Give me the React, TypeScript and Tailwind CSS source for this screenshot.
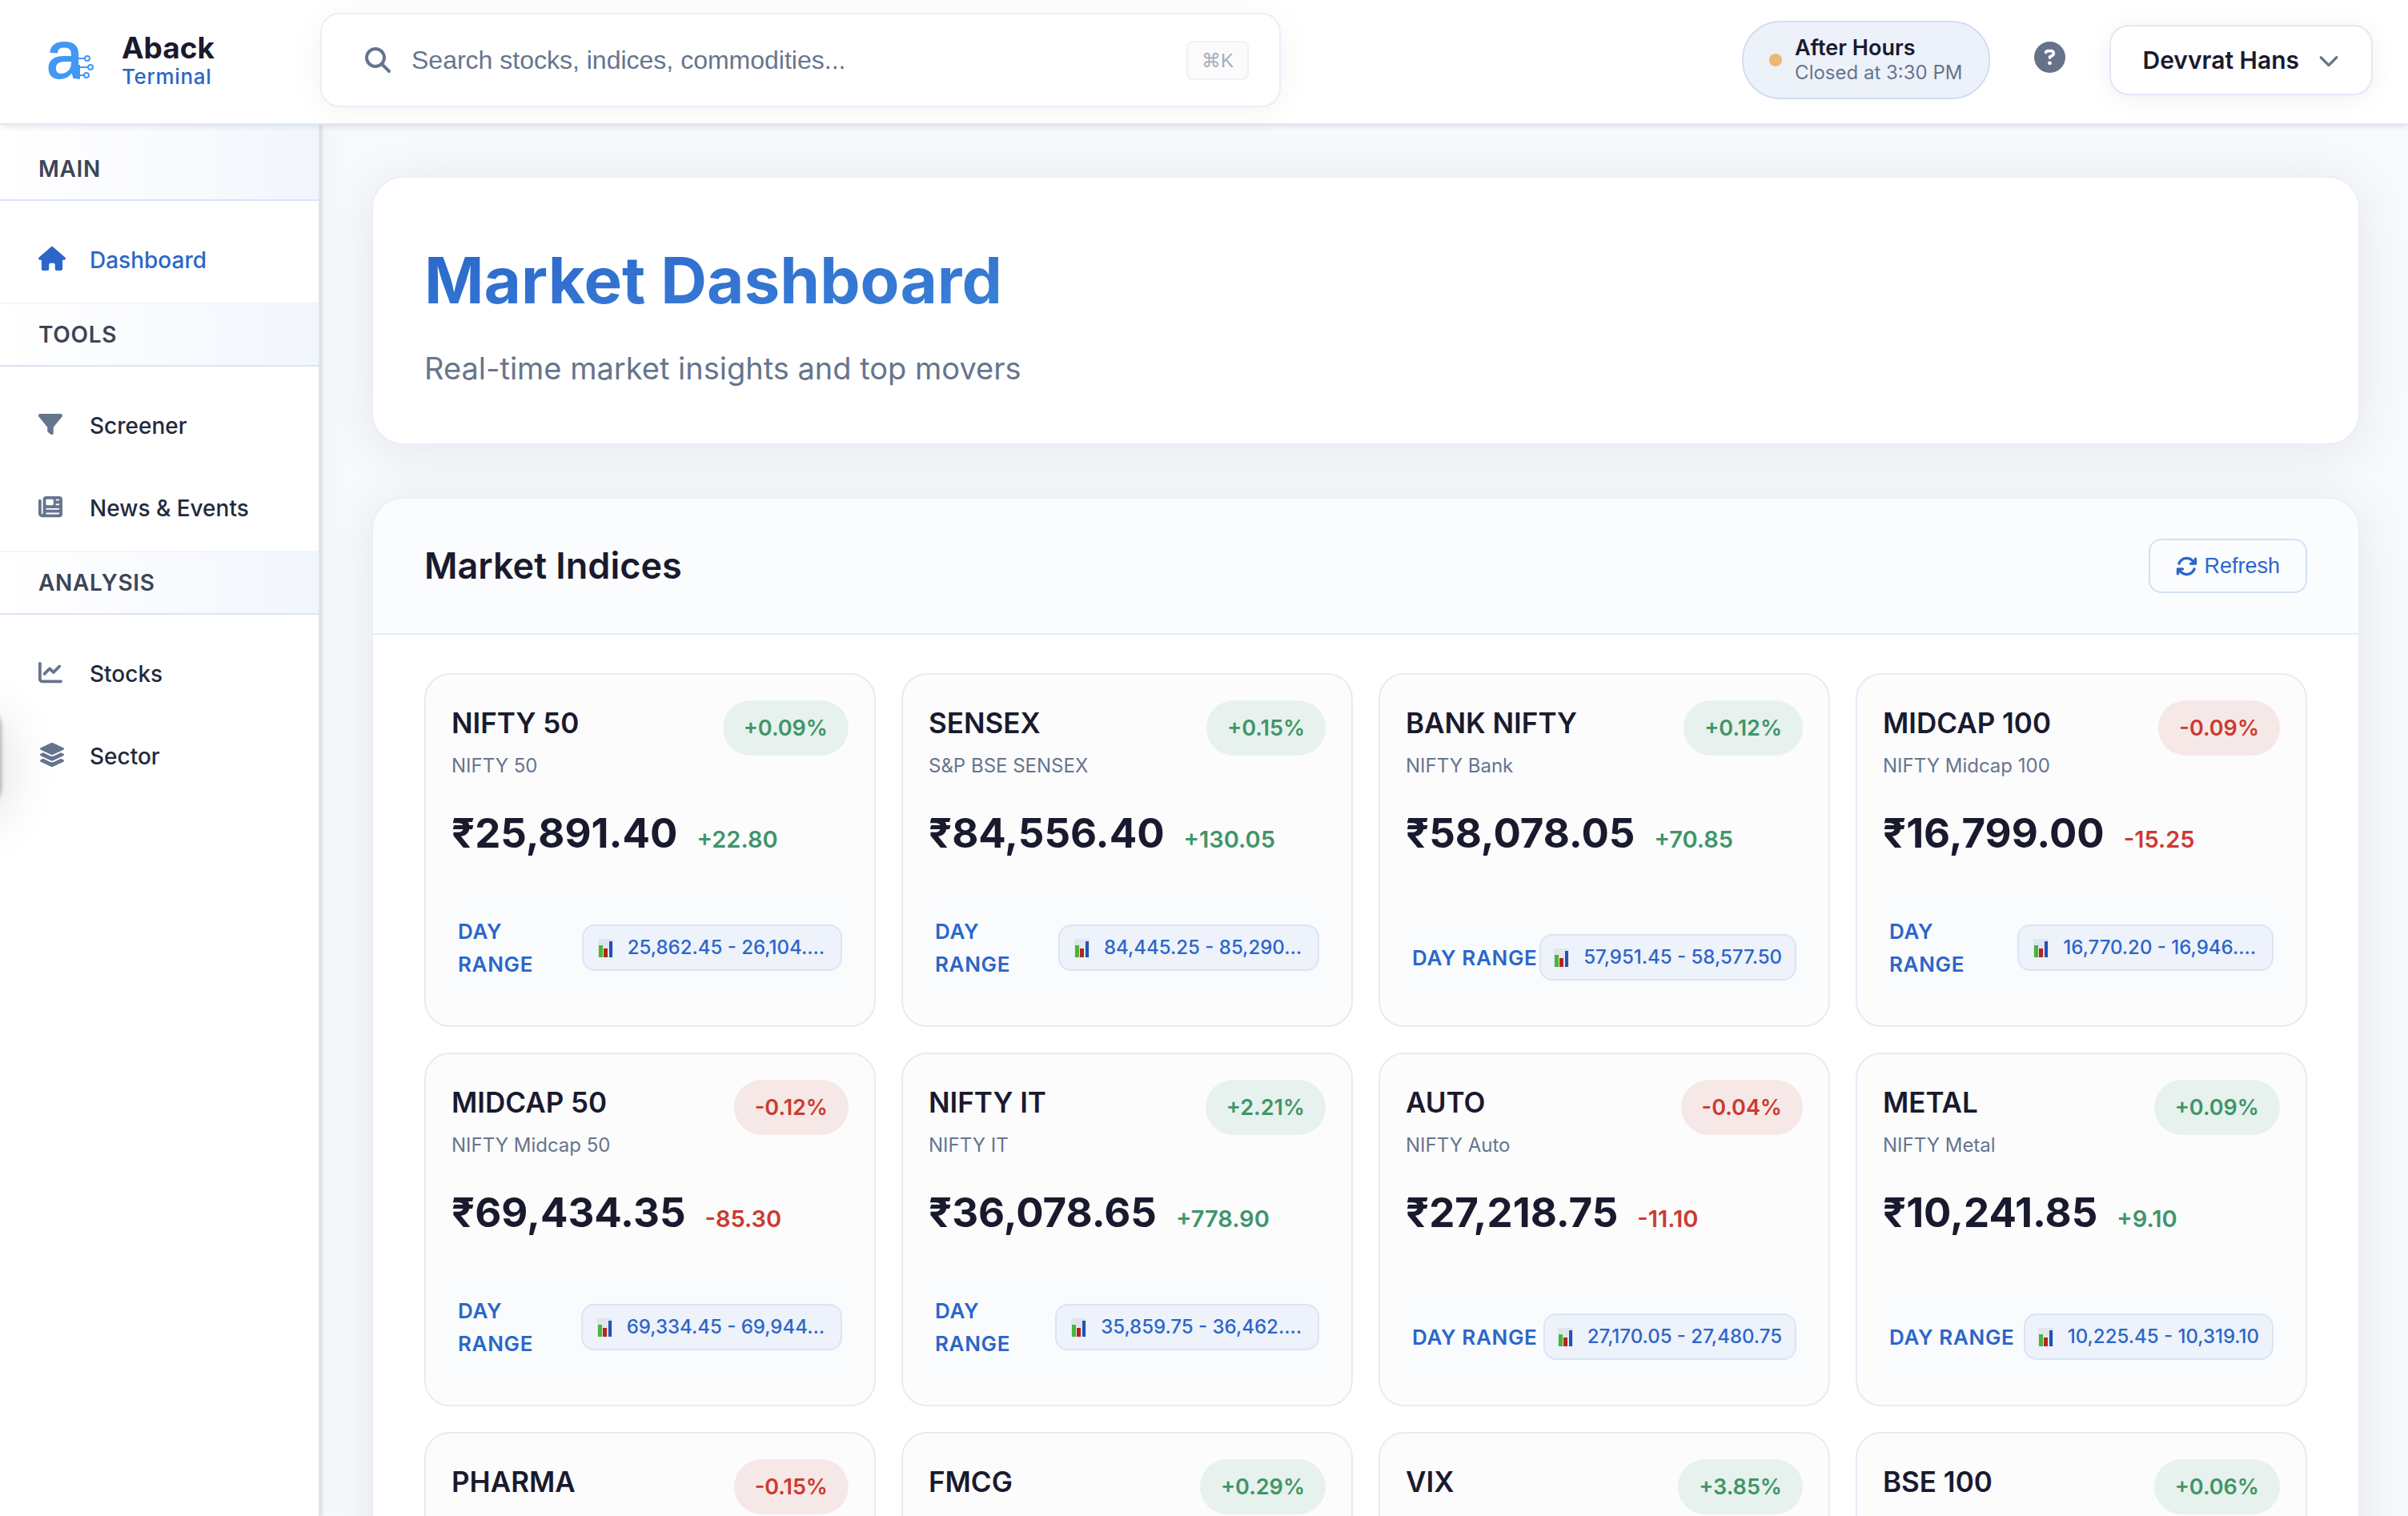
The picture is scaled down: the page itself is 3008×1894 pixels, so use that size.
import type { IconType } from "react-icons";
import {
  FaArrowsRotate,
  FaChartLine,
  FaChevronDown,
  FaCircleQuestion,
  FaFilter,
  FaHouse,
  FaLayerGroup,
  FaMagnifyingGlass,
  FaNewspaper,
} from "react-icons/fa6";

type NavItem = { label: string; icon: IconType; wide?: boolean; active?: boolean };
type NavGroup = { title: string; items: NavItem[] };

const navGroups: NavGroup[] = [
  { title: "Main", items: [{ label: "Dashboard", icon: FaHouse, wide: true, active: true }] },
  {
    title: "Tools",
    items: [
      { label: "Screener", icon: FaFilter },
      { label: "News & Events", icon: FaNewspaper },
    ],
  },
  {
    title: "Analysis",
    items: [
      { label: "Stocks", icon: FaChartLine },
      { label: "Sector", icon: FaLayerGroup, wide: true },
    ],
  },
];

type MarketIndex = {
  name: string;
  full?: string;
  pct: string;
  price?: string;
  change?: string;
  range?: string;
};

const indices: MarketIndex[] = [
  { name: "NIFTY 50", full: "NIFTY 50", pct: "+0.09%", price: "₹25,891.40", change: "+22.80", range: "25,862.45 - 26,104.…" },
  { name: "SENSEX", full: "S&P BSE SENSEX", pct: "+0.15%", price: "₹84,556.40", change: "+130.05", range: "84,445.25 - 85,290…" },
  { name: "BANK NIFTY", full: "NIFTY Bank", pct: "+0.12%", price: "₹58,078.05", change: "+70.85", range: "57,951.45 - 58,577.50" },
  { name: "MIDCAP 100", full: "NIFTY Midcap 100", pct: "-0.09%", price: "₹16,799.00", change: "-15.25", range: "16,770.20 - 16,946.…" },
  { name: "MIDCAP 50", full: "NIFTY Midcap 50", pct: "-0.12%", price: "₹69,434.35", change: "-85.30", range: "69,334.45 - 69,944…" },
  { name: "NIFTY IT", full: "NIFTY IT", pct: "+2.21%", price: "₹36,078.65", change: "+778.90", range: "35,859.75 - 36,462.…" },
  { name: "AUTO", full: "NIFTY Auto", pct: "-0.04%", price: "₹27,218.75", change: "-11.10", range: "27,170.05 - 27,480.75" },
  { name: "METAL", full: "NIFTY Metal", pct: "+0.09%", price: "₹10,241.85", change: "+9.10", range: "10,225.45 - 10,319.10" },
  { name: "PHARMA", pct: "-0.15%" },
  { name: "FMCG", pct: "+0.29%" },
  { name: "VIX", pct: "+3.85%" },
  { name: "BSE 100", pct: "+0.06%" },
];

function Logo() {
  return (
    <svg viewBox="0 0 60 56" className="h-14 w-15 shrink-0 overflow-visible" aria-hidden="true">
      <text
        x="-2"
        y="50"
        fontFamily="'Liberation Sans', sans-serif"
        fontSize="82"
        fill="#4299f5"
        stroke="#4299f5"
        strokeWidth="2"
      >
        a
      </text>
      <rect x="31" y="34" width="9" height="17" fill="#4299f5" />
      <rect x="40" y="38" width="6" height="14" fill="#ffffff" />
      <g fill="none" stroke="#4299f5" strokeWidth="2">
        <path d="M38 26h8M38 37h12M38 47h7" />
        <circle cx="49" cy="26" r="3" fill="#ffffff" />
        <circle cx="53" cy="37" r="3" fill="#ffffff" />
        <circle cx="48" cy="47" r="3" fill="#ffffff" />
      </g>
    </svg>
  );
}

function BarsIcon() {
  return (
    <svg viewBox="0 0 19 23" className="h-[23px] w-[19px] shrink-0" aria-hidden="true">
      <rect width="19" height="23" fill="#dfe6ee" />
      <rect x="1" y="8" width="5" height="15" fill="#4cb537" />
      <rect x="7" y="12" width="5" height="11" fill="#b3261c" />
      <rect x="14" y="3" width="4" height="20" fill="#2152b8" />
    </svg>
  );
}

function Header() {
  return (
    <header className="relative z-20 flex shrink-0 items-center border-b-2 border-[#dfe8f5] bg-white pt-4 pr-11 pb-5 shadow-[0_2px_8px_rgba(0,0,0,0.10)]">
      <a href="#home" className="flex w-[400px] shrink-0 items-center gap-8 pl-15">
        <Logo />
        <span className="flex flex-col">
          <span className="text-[37px] leading-[42px] font-bold text-[#1a1a2e]">Aback</span>
          <span className="text-[26px] leading-[30px] font-medium tracking-wide text-[#2b66c9]">Terminal</span>
        </span>
      </a>
      <label className="flex h-[118px] w-[1200px] items-center gap-[26px] rounded-3xl border-2 border-[#e8effb] bg-white pr-[38px] pl-[54px] shadow-[0_4px_40px_rgba(0,0,0,0.05)]">
        <FaMagnifyingGlass className="size-8 shrink-0 text-[#66758e]" />
        <input
          type="text"
          aria-label="Search"
          placeholder="Search stocks, indices, commodities..."
          className="min-w-0 flex-1 bg-transparent font-['Liberation_Sans',sans-serif] text-[32px] outline-none placeholder:text-[#66758e]"
        />
        <kbd className="rounded-lg border-2 border-[#edf2f9] bg-[#fbfbfc] px-[17px] font-['Liberation_Sans',sans-serif] text-2xl leading-[45px] text-[#a3adbc]">
          ⌘K
        </kbd>
      </label>
      <div className="ml-auto flex items-center">
        <div className="flex h-[98px] items-center gap-4 rounded-[48px] border-2 border-[#d0def2] bg-[#edf2fa] px-8">
          <span className="size-4 rounded-full bg-[#ebb974] shadow-[0_0_20px_4px_rgba(235,185,116,0.08)]" />
          <span className="flex flex-col">
            <span className="text-[27px] leading-8 font-semibold text-[#1a1a2e]">After Hours</span>
            <span className="text-2xl leading-[30px] text-[#66758e]">Closed at 3:30 PM</span>
          </span>
        </div>
        <button type="button" aria-label="Help" className="mx-[55px] pb-2">
          <FaCircleQuestion className="size-[39px] text-[#66728a]" />
        </button>
        <button
          type="button"
          className="flex h-[88px] items-center gap-6 rounded-3xl border-2 border-[#dfe8f7] bg-white px-10 shadow-[0_4px_32px_rgba(0,0,0,0.06)]"
        >
          <span className="text-[30px] font-semibold text-[#1a1a2e]">Devvrat Hans</span>
          <FaChevronDown className="size-[26px] text-[#66758e]" />
        </button>
      </div>
    </header>
  );
}

function Sidebar() {
  return (
    <nav className="z-10 flex w-[400px] shrink-0 flex-col border-r-2 border-[#dbe5f5] bg-white shadow-[2px_0_4px_rgba(0,0,0,0.12),8px_0_32px_rgba(0,0,0,0.03)]">
      {navGroups.map((group) => (
        <section key={group.title}>
          <h2 className="border-y-2 border-t-[#f0f4fa] border-b-[#d9e4f5] bg-linear-to-r from-white to-[#f2f6fd] px-12 py-4 text-[28px] leading-11 font-semibold tracking-wide text-[#3d4556] uppercase in-[section:first-child]:border-t-0 in-[section:first-child]:pt-[33px]">
            {group.title}
          </h2>
          <ul className="pt-[22px] pb-0.5">
            {group.items.map(({ label, icon: Icon, wide, active }) => (
              <li key={label}>
                <a
                  href={`#${label.toLowerCase()}`}
                  className={`flex h-[103px] items-center pl-12 text-[28px] font-medium ${active ? "text-[#2b66c9]" : "text-[#1f2a3d]"}`}
                >
                  <span className="flex w-16 shrink-0 pb-1">
                    <Icon className={`h-[30px] ${wide ? "w-[34px]" : "w-[30px]"} ${active ? "text-[#2b66c9]" : "text-[#66758e]"}`} />
                  </span>
                  {label}
                </a>
              </li>
            ))}
          </ul>
        </section>
      ))}
    </nav>
  );
}

function IndexCard({ item }: { item: MarketIndex }) {
  const up = item.pct.startsWith("+");
  const truncated = item.range?.endsWith("…");
  return (
    <article className="flex min-w-0 flex-col rounded-4xl border-2 border-[#e5ecf7] bg-[#fcfcfd] p-8">
      <div className="flex items-start justify-between">
        <div>
          <h3 className="text-[35px] leading-14 font-semibold text-[#1a1a2e]">{item.name}</h3>
          {item.full && <p className="mt-1.5 text-2xl leading-10 text-[#66758e]">{item.full}</p>}
        </div>
        <span
          className={`rounded-full px-[26px] py-3 text-[27px] leading-[45px] font-semibold ${up ? "bg-[#e7f1ed] text-[#40956a]" : "bg-[#f6e8e7] text-[#cc3a30]"}`}
        >
          {item.pct}
        </span>
      </div>
      {item.price && (
        <div className="mt-6 flex items-baseline gap-6">
          <span className="text-[51px] leading-20 font-bold text-[#1a1a2e]">{item.price}</span>
          <span className={`text-[29px] font-semibold ${up ? "text-[#40956a]" : "text-[#cc3a30]"}`}>{item.change}</span>
        </div>
      )}
      {item.range && (
        <div className="-mx-2 mt-auto pt-[38px]">
          <div className="flex items-center justify-between rounded-xl bg-[#fafbfd] px-4 py-6">
            <span
              className={`text-[26px] leading-[41px] font-semibold tracking-wide text-[#2b66c9] uppercase ${truncated ? "w-min" : "whitespace-nowrap"}`}
            >
              Day Range
            </span>
            <span
              className={`flex items-center gap-[18px] rounded-2xl border-2 border-[#dae5f5] bg-[#eef2fa] py-[7px] text-2xl leading-10 font-medium whitespace-nowrap text-[#2b66c9] ${truncated ? "pr-5 pl-[18px]" : "px-4"}`}
            >
              <BarsIcon />
              {item.range}
            </span>
          </div>
        </div>
      )}
    </article>
  );
}

export default function App() {
  return (
    <div className="relative flex h-screen flex-col overflow-hidden bg-[#f7f9fb] font-['Inter',sans-serif]">
      <Header />
      <div className="flex min-h-0 flex-1">
        <Sidebar />
        <main className="flex min-w-0 flex-1 flex-col gap-[65px] overflow-hidden pt-16 pr-15 pl-16">
          <section className="shrink-0 rounded-[40px] border-2 border-[#e8effa] bg-white px-16 pt-20 pb-16 shadow-[0_8px_64px_rgba(0,0,0,0.08)]">
            <h1 className="w-max bg-linear-to-br from-[#2b66c9] to-[#3b82d9] bg-clip-text text-[80px] leading-24 font-bold text-transparent">
              Market Dashboard
            </h1>
            <p className="mt-8 text-[38px] leading-15 text-[#66758e]">Real-time market insights and top movers</p>
          </section>
          <section className="shrink-0 overflow-hidden rounded-[40px] border-2 border-[#e8effa] bg-white shadow-[0_8px_64px_rgba(0,0,0,0.08)]">
            <div className="flex h-[170px] items-center justify-between border-b-2 border-[#e5ecf8] bg-[#fbfcfe] px-16">
              <h2 className="text-[45px] font-semibold text-[#1a1a2e]">Market Indices</h2>
              <button
                type="button"
                className="flex h-[68px] items-center gap-2 rounded-2xl border-2 border-[#d3e0f4] px-8 font-['Liberation_Sans',sans-serif] text-[27px] text-[#2b66c9]"
              >
                <FaArrowsRotate className="size-[27px]" />
                Refresh
              </button>
            </div>
            <div className="grid grid-cols-4 gap-8 px-16 py-12">
              {indices.map((item) => (
                <IndexCard key={item.name} item={item} />
              ))}
            </div>
          </section>
        </main>
      </div>
      <button
        type="button"
        aria-label="Open side panel"
        className="absolute top-[890px] -left-16 z-30 h-[112px] w-16 rounded-2xl bg-white shadow-[0_0_6px_rgba(0,0,0,0.45),0_12px_72px_rgba(0,0,0,0.16)]"
      />
    </div>
  );
}
